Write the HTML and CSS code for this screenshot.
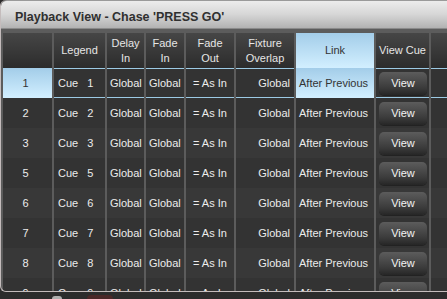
FILE: index.html
```html
<!DOCTYPE html>
<html>
<head>
<meta charset="utf-8">
<link rel="stylesheet" href="styles.css">
</head>
<body>
<div class="window">
  <div class="titlebar">Playback View - Chase 'PRESS GO'</div>
  <div class="grid">
    <div class="hd"></div>
    <div class="hd">Legend</div>
    <div class="hd">Delay<br>In</div>
    <div class="hd">Fade<br>In</div>
    <div class="hd">Fade<br>Out</div>
    <div class="hd">Fixture<br>Overlap</div>
    <div class="hd link">Link</div>
    <div class="hd">View Cue</div>
    <div class="hd"></div>

    <div class="c num sel">1</div>
    <div class="c cue selrow">Cue   1</div>
    <div class="c l selrow">Global</div>
    <div class="c l selrow">Global</div>
    <div class="c fo selrow">= As In</div>
    <div class="c r selrow">Global</div>
    <div class="c l sel">After Previous</div>
    <div class="c btn selrow"><span class="view">View</span></div>
    <div class="c selrow"></div>

    <div class="c num">2</div>
    <div class="c cue">Cue   2</div>
    <div class="c l">Global</div>
    <div class="c l">Global</div>
    <div class="c fo">= As In</div>
    <div class="c r">Global</div>
    <div class="c l">After Previous</div>
    <div class="c btn"><span class="view">View</span></div>
    <div class="c"></div>

    <div class="c num alt">3</div>
    <div class="c cue alt">Cue   3</div>
    <div class="c l alt">Global</div>
    <div class="c l alt">Global</div>
    <div class="c fo alt">= As In</div>
    <div class="c r alt">Global</div>
    <div class="c l alt">After Previous</div>
    <div class="c btn alt"><span class="view">View</span></div>
    <div class="c alt"></div>

    <div class="c num">5</div>
    <div class="c cue">Cue   5</div>
    <div class="c l">Global</div>
    <div class="c l">Global</div>
    <div class="c fo">= As In</div>
    <div class="c r">Global</div>
    <div class="c l">After Previous</div>
    <div class="c btn"><span class="view">View</span></div>
    <div class="c"></div>

    <div class="c num alt">6</div>
    <div class="c cue alt">Cue   6</div>
    <div class="c l alt">Global</div>
    <div class="c l alt">Global</div>
    <div class="c fo alt">= As In</div>
    <div class="c r alt">Global</div>
    <div class="c l alt">After Previous</div>
    <div class="c btn alt"><span class="view">View</span></div>
    <div class="c alt"></div>

    <div class="c num">7</div>
    <div class="c cue">Cue   7</div>
    <div class="c l">Global</div>
    <div class="c l">Global</div>
    <div class="c fo">= As In</div>
    <div class="c r">Global</div>
    <div class="c l">After Previous</div>
    <div class="c btn"><span class="view">View</span></div>
    <div class="c"></div>

    <div class="c num alt">8</div>
    <div class="c cue alt">Cue   8</div>
    <div class="c l alt">Global</div>
    <div class="c l alt">Global</div>
    <div class="c fo alt">= As In</div>
    <div class="c r alt">Global</div>
    <div class="c l alt">After Previous</div>
    <div class="c btn alt"><span class="view">View</span></div>
    <div class="c alt"></div>

    <div class="c num">9</div>
    <div class="c cue">Cue   9</div>
    <div class="c l">Global</div>
    <div class="c l">Global</div>
    <div class="c fo">= As In</div>
    <div class="c r">Global</div>
    <div class="c l">After Previous</div>
    <div class="c btn"><span class="view">View</span></div>
    <div class="c"></div>
  </div>
</div>
<div class="below">
  <span class="knob"></span>
  <span class="dot"></span>
</div>
</body>
</html>
```

FILE: styles.css
```css
html, body {
  margin: 0;
  padding: 0;
  background: #2c2c2c;
  overflow: hidden;
  width: 447px;
  height: 299px;
}
.window {
  width: 446px;
  height: 291px;
  border-left: 1px solid #c4bcbc;
  border-bottom: 1px solid #c4bcbc;
  border-radius: 6px 0 0 6px;
  overflow: hidden;
  background: #5c5c5c;
  font-family: "Liberation Sans", Arial, sans-serif;
  font-size: 11px;
}
.titlebar {
  height: 29px;
  box-sizing: border-box;
  padding: 9px 0 0 14px;
  background: linear-gradient(#ececec, #d6d6d6 50%, #b2b2b2);
  border-top: 1px solid #9a9a9a;
  border-bottom: 1px solid #8a8a8a;
  border-radius: 6px 0 0 0;
  color: #303030;
  font-weight: bold;
  font-size: 12.5px;
  line-height: 14px;
}
.grid {
  display: grid;
  grid-template-columns: 49px 51px 37px 38px 48px 58px 78px 53px 16px;
  grid-template-rows: 35px repeat(8, 30px);
  column-gap: 2px;
  padding: 4px 0 0 2px;
}
.hd {
  background: linear-gradient(#464646, #2c2c2c);
  color: #e6e6e6;
  display: flex;
  align-items: center;
  justify-content: center;
  text-align: center;
  line-height: 15px;
}
.hd.link {
  background: linear-gradient(#a3cde9, #d2efff);
  color: #333;
}
.c {
  background: #333333;
  color: #ececec;
  display: flex;
  align-items: center;
  white-space: pre;
  box-sizing: border-box;
}
.c.alt {
  background: #383838;
}
.num { justify-content: center; padding-right: 4px; }
.cue { padding-left: 4px; }
.l { padding-left: 3px; }
.fo { padding-left: 7px; }
.r { justify-content: flex-end; padding-right: 4px; }
.btn { justify-content: center; padding-left: 1px; }
.selrow {
  border-top: 1px solid #9ccae4;
  border-bottom: 1px solid #9ccae4;
}
.sel {
  background: linear-gradient(#a3cde9, #d2efff);
  color: #333;
}
.view {
  width: 48px;
  height: 23px;
  border-radius: 5px;
  background: linear-gradient(#5c5c5c, #3a3a3a 70%, #262626);
  color: #f2f2f2;
  display: flex;
  align-items: center;
  justify-content: center;
  box-shadow: 0 1px 0 #222;
}
.below {
  height: 7px;
  display: flex;
  align-items: flex-end;
  padding-left: 52px;
  gap: 25px;
}
.knob {
  width: 10px;
  height: 3px;
  background: #b0b0b0;
  border-radius: 3px 3px 0 0;
}
.dot {
  width: 26px;
  height: 4px;
  background: #4a2828;
  border-radius: 13px 13px 0 0;
}
```
